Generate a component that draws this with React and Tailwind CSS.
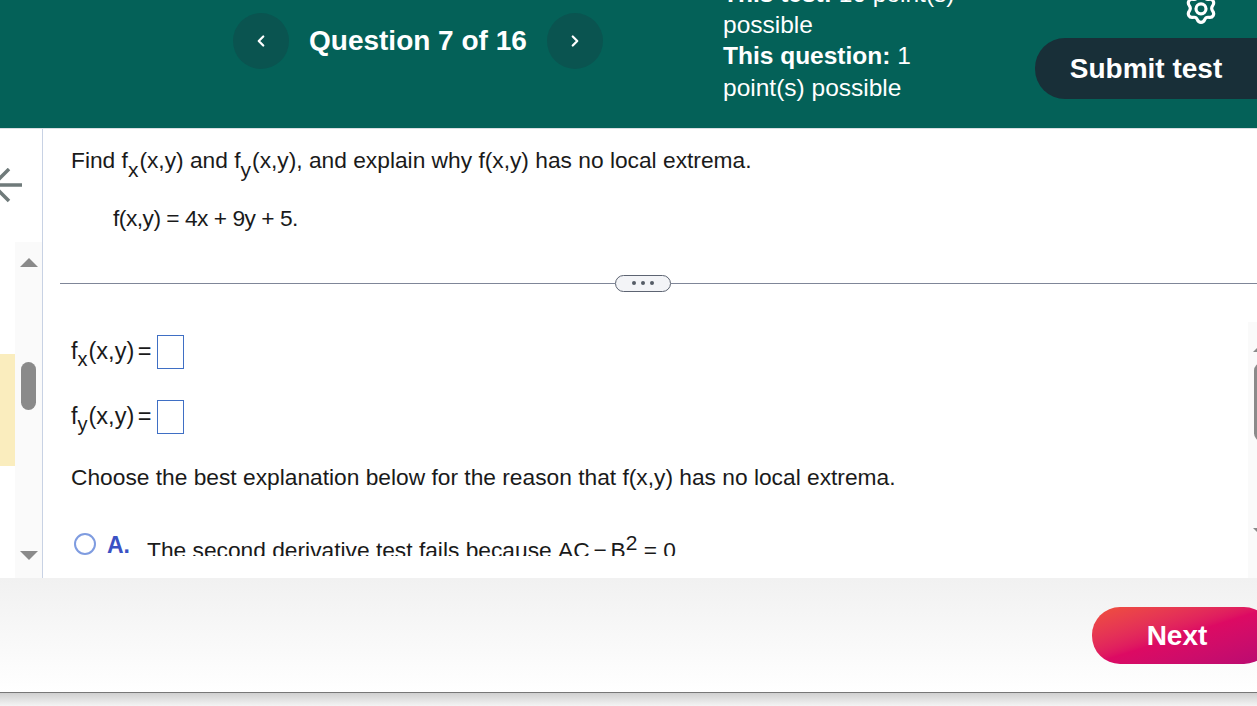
import { ChevronLeft, ChevronRight } from "lucide-react";

function Gear() {
  return (
    <svg width="40" height="40" viewBox="0 0 24 24" fill="none" stroke="white" strokeWidth="1.9" strokeLinecap="round" strokeLinejoin="round">
      <path d="M9.8 4.2c.9-2.2 3.5-2.2 4.4 0 .4 1 1.5 1.6 2.6 1.4 2.3-.4 3.6 1.9 2.2 3.8-.7.9-.7 2.2 0 3.2 1.4 1.9.1 4.2-2.2 3.8-1.1-.2-2.2.4-2.6 1.4-.9 2.2-3.5 2.2-4.4 0-.4-1-1.5-1.6-2.6-1.4-2.3.4-3.6-1.9-2.2-3.8.7-1 .7-2.3 0-3.2-1.4-1.9-.1-4.2 2.2-3.8 1.1.2 2.2-.4 2.6-1.4z" />
      <circle cx="12" cy="11.3" r="3" />
    </svg>
  );
}

function Sub({ children }) {
  return <sub className="text-[21px] leading-none bottom-0 align-[-9px] mr-[1px]">{children}</sub>;
}

function AnswerRow({ name }) {
  return (
    <div className="flex items-center h-[36px]">
      <span className="text-[23.5px] [word-spacing:-3px] leading-[30px]">
        f<sub className="text-[20px] leading-none bottom-0 align-[-7px] mr-[1px]">{name}</sub>(x,y) =
      </span>
      <span className="ml-[6px] w-[27px] h-[34px] border border-[#3f6fc4] bg-white"></span>
    </div>
  );
}

export default function App() {
  return (
    <div className="w-[1257px] h-[706px] overflow-hidden bg-white text-[#1a1a1a] font-['Liberation_Sans',Arial,sans-serif]">
      <header className="h-[129px] bg-[#046158] border-b border-[#d9dee2] text-white flex overflow-hidden">
        <div className="w-[233px] shrink-0"></div>
        <div className="w-[490px] shrink-0 flex items-start pt-[13px]">
          <button className="w-[56px] h-[56px] rounded-full bg-[#0a5450] flex items-center justify-center">
            <ChevronLeft size={18} strokeWidth={3} />
          </button>
          <h1 className="ml-[20px] w-[238px] h-[56px] leading-[55px] text-[28px] font-bold">Question 7 of 16</h1>
          <button className="w-[56px] h-[56px] rounded-full bg-[#0a5450] flex items-center justify-center">
            <ChevronRight size={18} strokeWidth={3} />
          </button>
        </div>
        <div className="w-[290px] shrink-0 flex flex-col justify-end pb-[24px] text-[24.5px] leading-[32px]">
          <p className="leading-[31px]"><b>This test:</b> 16 point(s)<br />possible</p>
          <p><b>This question:</b> 1<br />point(s) possible</p>
        </div>
        <div className="flex-1 min-w-0 flex flex-col">
          <div className="h-[38px] shrink-0 flex items-end justify-start pl-[168px] pb-[8px]">
            <span className="shrink-0"><Gear /></span>
          </div>
          <button className="w-[260px] h-[61px] shrink-0 ml-[22px] pr-[38px] rounded-[30px] bg-[#182f38] text-[28px] font-bold text-white">
            Submit test
          </button>
        </div>
      </header>

      <main className="h-[449px] flex">
        <aside className="w-[43px] shrink-0 border-r border-[#c8d2e4] flex flex-col">
          <div className="h-[113px] shrink-0 overflow-hidden pt-[39px]">
            <svg width="24" height="36" viewBox="0 0 24 36" fill="none" stroke="#6f7a7a" strokeWidth="3.5">
              <path d="M9 1 L-7 17 L9 33 M-4 17 H22" />
            </svg>
          </div>
          <div className="flex-1 flex">
            <div className="w-[15px] pt-[112px]">
              <div className="h-[112px] bg-[#faedbe]"></div>
            </div>
            <div className="w-[27px] bg-[#fafafa] flex flex-col items-center">
              <div className="mt-[16px] w-0 h-0 border-x-[9px] border-x-transparent border-b-[9px] border-b-[#8a8a8a]"></div>
              <div className="mt-[95px] w-[15px] h-[48px] rounded-[8px] bg-[#8a8a8a]"></div>
              <div className="mt-[141px] w-0 h-0 border-x-[9px] border-x-transparent border-t-[9px] border-t-[#8a8a8a]"></div>
            </div>
          </div>
        </aside>

        <section className="flex-1 min-w-0 h-[427px] overflow-hidden pl-[17px]">
          <p className="pl-[11px] mt-[16px] h-[32px] text-[22.75px] leading-[30px] whitespace-nowrap">
            Find f<Sub>x</Sub>(x,y) and f<Sub>y</Sub>(x,y), and explain why f(x,y) has no local extrema.
          </p>
          <p className="pl-[53px] mt-[26px] h-[32px] text-[22.75px] leading-[30px] tracking-[-0.5px]">
            f(x,y) = 4x + 9y + 5.
          </p>
          <div className="mt-[39px] h-[18px] flex items-center">
            <div className="w-[555px] h-px bg-[#7f8698]"></div>
            <div className="w-[56px] h-[17px] rounded-[9px] border border-[#5d6472] bg-[#f3f4f7] flex items-center justify-center gap-[5px]">
              <span className="w-[4px] h-[4px] rounded-full bg-[#555c66]"></span>
              <span className="w-[4px] h-[4px] rounded-full bg-[#555c66]"></span>
              <span className="w-[4px] h-[4px] rounded-full bg-[#555c66]"></span>
            </div>
            <div className="w-[586px] h-px bg-[#7f8698]"></div>
          </div>
          <div className="pl-[11px] mt-[42px] flex flex-col gap-[29px]">
            <AnswerRow name="x" />
            <AnswerRow name="y" />
          </div>
          <p className="pl-[11px] mt-[27px] h-[32px] text-[22.75px] leading-[30px] whitespace-nowrap">
            Choose the best explanation below for the reason that f(x,y) has no local extrema.
          </p>
          <div className="pl-[14px] mt-[39px] flex items-start">
            <span className="w-[22px] h-[22px] rounded-full border-[2.5px] border-[#7f9ce0] bg-white shrink-0"></span>
            <b className="ml-[11px] text-[23px] leading-[24px] text-[#3b52c4]">A.</b>
            <span className="ml-[17px] mt-[-1px] text-[22.75px] leading-[30px] whitespace-nowrap">
              The second derivative test fails because <span className="[word-spacing:-2.5px]">AC − B</span>
              <sup className="text-[21px] leading-none top-0 align-[8px]">2</sup> = 0
            </span>
          </div>
        </section>

        <aside className="w-[9px] ml-[-9px] shrink-0 h-[256px] mt-[193px] bg-[#fafafa] overflow-hidden pl-[6px] flex flex-col">
          <div className="mt-[21px] w-0 h-0 ml-[-1px] border-x-[9px] border-x-transparent border-b-[9px] border-b-[#8a8a8a]"></div>
          <div className="mt-[11px] w-[15px] h-[78px] rounded-[8px] bg-[#8a8a8a] shrink-0"></div>
          <div className="mt-[87px] w-0 h-0 ml-[-1px] border-x-[9px] border-x-transparent border-t-[9px] border-t-[#8a8a8a]"></div>
        </aside>
      </main>

      <footer className="h-[115px] bg-gradient-to-b from-[#f1f1f1] to-white border-b border-[#777] pt-[29px] pl-[1092px] overflow-hidden">
        <button className="w-[180px] h-[57px] rounded-[28px] bg-gradient-to-br from-[#f0503a] via-[#dd0a63] to-[#b80a72] pr-[10px] text-[28px] font-bold text-white">
          Next
        </button>
      </footer>
      <div className="h-[13px] bg-gradient-to-b from-[#d0d0d0] to-[#f4f4f4]"></div>
    </div>
  );
}
